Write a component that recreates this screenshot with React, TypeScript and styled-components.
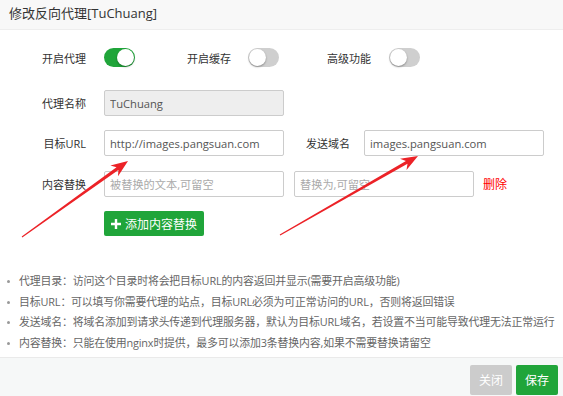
import styled, { createGlobalStyle } from "styled-components";

const GlobalStyle = createGlobalStyle`
  body {
    margin: 0;
    background: #fff;
    font-family: "Open Sans", "Noto Sans CJK SC", sans-serif;
    color: #333;
  }
`;

const Dialog = styled.div`
  position: relative;
  width: 563px;
  height: 396px;
  overflow: hidden;
  display: flex;
  flex-direction: column;
  background: #fff;
`;

const TitleBar = styled.div`
  height: 29px;
  line-height: 27px;
  padding-left: 9px;
  background: #f8f8f8;
  border-bottom: 1px solid #eee;
  font-size: 13px;
  color: #333;
`;

const Body = styled.div`
  flex: 1;
  display: flex;
  flex-direction: column;
  padding-top: 18px;
`;

const Row = styled.div<{ $top?: number }>`
  display: flex;
  align-items: center;
  margin-top: ${(p) => p.$top ?? 0}px;
`;

const Label = styled.span<{ $width: number; $gap?: number }>`
  width: ${(p) => p.$width}px;
  margin-right: ${(p) => p.$gap ?? 18}px;
  text-align: right;
  font-size: 11px;
  color: #333;
  white-space: nowrap;
  flex-shrink: 0;
`;

const Toggle = styled.span<{ $on?: boolean }>`
  position: relative;
  width: 31px;
  height: 19px;
  border-radius: 10px;
  background: ${(p) => (p.$on ? "#20a53a" : "#cfcfcf")};
  flex-shrink: 0;

  &::after {
    content: "";
    position: absolute;
    top: 1px;
    left: ${(p) => (p.$on ? "13px" : "1px")};
    width: 17px;
    height: 17px;
    border-radius: 50%;
    background: #fff;
    box-shadow: 0 1px 2px rgba(0, 0, 0, 0.35);
  }
`;

const Input = styled.input<{ $gray?: boolean }>`
  box-sizing: border-box;
  width: 180px;
  height: 26px;
  padding: 0 5px;
  border: 1px solid #ccc;
  border-radius: 2px;
  background: ${(p) => (p.$gray ? "#eee" : "#fff")};
  font-family: "Open Sans", "Noto Sans CJK SC", sans-serif;
  font-size: 11.2px;
  color: #555;
  outline: none;
  flex-shrink: 0;

  &::placeholder {
    color: #aaa;
  }
`;

const Spacer = styled.span<{ $w: number }>`
  width: ${(p) => p.$w}px;
  flex-shrink: 0;
`;

const DeleteLink = styled.span`
  font-size: 12px;
  color: #f00;
`;

const AddButton = styled.button`
  margin-left: 104px;
  width: 100px;
  height: 25px;
  display: flex;
  align-items: center;
  justify-content: center;
  gap: 4px;
  border: none;
  border-radius: 2px;
  background: #20a53a;
  color: #fff;
  font-family: "Open Sans", "Noto Sans CJK SC", sans-serif;
  font-size: 12px;
  padding: 0;
`;

const Tips = styled.ul`
  list-style: none;
  margin: 35px 0 0;
  padding: 0 0 0 19px;
`;

const Tip = styled.li`
  position: relative;
  height: 20.5px;
  line-height: 20px;
  font-size: 10.9px;
  letter-spacing: -0.15px;
  color: #666;
  white-space: nowrap;

  &::before {
    content: "";
    position: absolute;
    left: -12px;
    top: 9px;
    width: 3px;
    height: 3px;
    border-radius: 50%;
    background: #999;
  }
`;

const Footer = styled.div`
  height: 31px;
  border-top: 1px solid #eaeaea;
  background: #f6f8f8;
  display: flex;
  justify-content: flex-end;
  align-items: flex-start;
  gap: 4px;
  padding: 7px 5px 0 0;
`;

const FooterButton = styled.button<{ $primary?: boolean }>`
  width: 42px;
  height: 30px;
  border: none;
  border-radius: 2px;
  padding: 0;
  background: ${(p) => (p.$primary ? "#20a53a" : "#ccc")};
  color: #fff;
  font-family: "Open Sans", "Noto Sans CJK SC", sans-serif;
  font-size: 12px;
`;

const Overlay = styled.svg`
  position: absolute;
  left: 0;
  top: 0;
  pointer-events: none;
`;

function PlusIcon() {
  return (
    <svg width="10" height="10" viewBox="0 0 10 10">
      <path d="M3.8 0h2.4v3.8H10v2.4H6.2V10H3.8V6.2H0V3.8h3.8z" fill="#fff" />
    </svg>
  );
}

type Pt = [number, number];

function arrowPoints(from: Pt, to: Pt) {
  const dx = to[0] - from[0];
  const dy = to[1] - from[1];
  const len = Math.hypot(dx, dy);
  const ux = dx / len;
  const uy = dy / len;
  const nx = -uy;
  const ny = ux;
  const head = 17;
  const notch = 13;
  const half = 6.5;
  const base: Pt = [to[0] - ux * head, to[1] - uy * head];
  const neck: Pt = [to[0] - ux * notch, to[1] - uy * notch];
  const pts: Pt[] = [
    [from[0] + nx * 0.6, from[1] + ny * 0.6],
    [neck[0] + nx * 1.6, neck[1] + ny * 1.6],
    [base[0] + nx * half, base[1] + ny * half],
    to,
    [base[0] - nx * half, base[1] - ny * half],
    [neck[0] - nx * 1.6, neck[1] - ny * 1.6],
    [from[0] - nx * 0.6, from[1] - ny * 0.6],
  ];
  return pts.map((p) => `${p[0].toFixed(1)},${p[1].toFixed(1)}`).join(" ");
}

function Arrow({ from, to }: { from: Pt; to: Pt }) {
  return <polygon points={arrowPoints(from, to)} fill="#ec2227" />;
}

export default function App() {
  return (
    <>
      <GlobalStyle />
      <Dialog>
        <TitleBar>修改反向代理[TuChuang]</TitleBar>
        <Body>
          <Row>
            <Label $width={86}>开启代理</Label>
            <Toggle $on />
            <Label $width={96} $gap={17}>开启缓存</Label>
            <Toggle />
            <Label $width={92} $gap={18}>高级功能</Label>
            <Toggle />
          </Row>
          <Row $top={23}>
            <Label $width={86}>代理名称</Label>
            <Input $gray readOnly value="TuChuang" />
          </Row>
          <Row $top={14}>
            <Label $width={86}>目标URL</Label>
            <Input readOnly value="http://images.pangsuan.com" />
            <Label $width={66} $gap={14}>发送域名</Label>
            <Input readOnly value="images.pangsuan.com" />
          </Row>
          <Row $top={15}>
            <Label $width={86}>内容替换</Label>
            <Input placeholder="被替换的文本,可留空" />
            <Spacer $w={10} />
            <Input placeholder="替换为,可留空" />
            <Spacer $w={9} />
            <DeleteLink>删除</DeleteLink>
          </Row>
          <Row $top={14}>
            <AddButton>
              <PlusIcon />
              添加内容替换
            </AddButton>
          </Row>
          <Tips>
            <Tip>代理目录：访问这个目录时将会把目标URL的内容返回并显示(需要开启高级功能)</Tip>
            <Tip>目标URL：可以填写你需要代理的站点，目标URL必须为可正常访问的URL，否则将返回错误</Tip>
            <Tip>发送域名：将域名添加到请求头传递到代理服务器，默认为目标URL域名，若设置不当可能导致代理无法正常运行</Tip>
            <Tip>内容替换：只能在使用nginx时提供，最多可以添加3条替换内容,如果不需要替换请留空</Tip>
          </Tips>
        </Body>
        <Footer>
          <FooterButton>关闭</FooterButton>
          <FooterButton $primary>保存</FooterButton>
        </Footer>
        <Overlay width="563" height="396">
          <Arrow from={[22, 237]} to={[128, 161]} />
          <Arrow from={[280, 235]} to={[418, 156]} />
        </Overlay>
      </Dialog>
    </>
  );
}
